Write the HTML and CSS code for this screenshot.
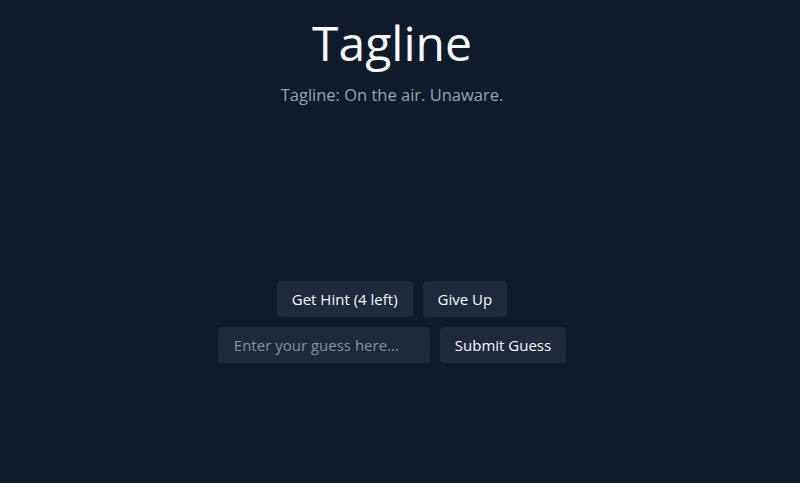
FILE: index.html
```html
<!DOCTYPE html>
<html lang="en">
<head>
  <meta charset="UTF-8" />
  <meta name="viewport" content="width=device-width, initial-scale=1.0" />
  <title>Tagline</title>
  <link rel="stylesheet" href="styles.css">
</head>
<body>
  <div class="game">
    <h1>Tagline</h1>
    <p class="clue">Tagline: On the air. Unaware.</p>

    <div class="controls">
      <div class="row">
        <button class="btn">Get Hint (4 left)</button>
        <button class="btn">Give Up</button>
      </div>
      <div class="row">
        <input type="text" class="guess" placeholder="Enter your guess here..." />
        <button class="btn">Submit Guess</button>
      </div>
    </div>
  </div>
</body>
</html>
```

FILE: styles.css
```css
body {
  font-family: "Open Sans", "Noto Sans", Arial, sans-serif;
  margin: 0;
  padding: 0;
  background-color: #0f1a2b;
  color: #f8fafc;
}
.game {
  display: flex;
  flex-direction: column;
  align-items: center;
  padding: 11px 16px 0 0;
}
h1 {
  font-size: 48px;
  font-weight: 400;
  margin: 0;
  line-height: 64px;
}
.clue {
  font-size: 16.5px;
  color: #94a3b8;
  margin: 8px 0 0;
  line-height: 24px;
}
.controls {
  margin-top: 174px;
  display: flex;
  flex-direction: column;
  align-items: center;
  gap: 10px;
}
.row {
  display: flex;
  gap: 10px;
}
.btn {
  font-family: inherit;
  font-size: 15px;
  height: 36px;
  padding: 0 15px;
  background-color: #1e293b;
  color: #f8fafc;
  border: none;
  border-radius: 4px;
  cursor: pointer;
}
.guess {
  font-family: inherit;
  font-size: 15px;
  width: 212px;
  height: 36px;
  box-sizing: border-box;
  padding: 0 16px;
  background-color: #1e293b;
  color: #f8fafc;
  border: none;
  border-radius: 4px;
}
.guess::placeholder {
  color: #8391a5;
}
```
